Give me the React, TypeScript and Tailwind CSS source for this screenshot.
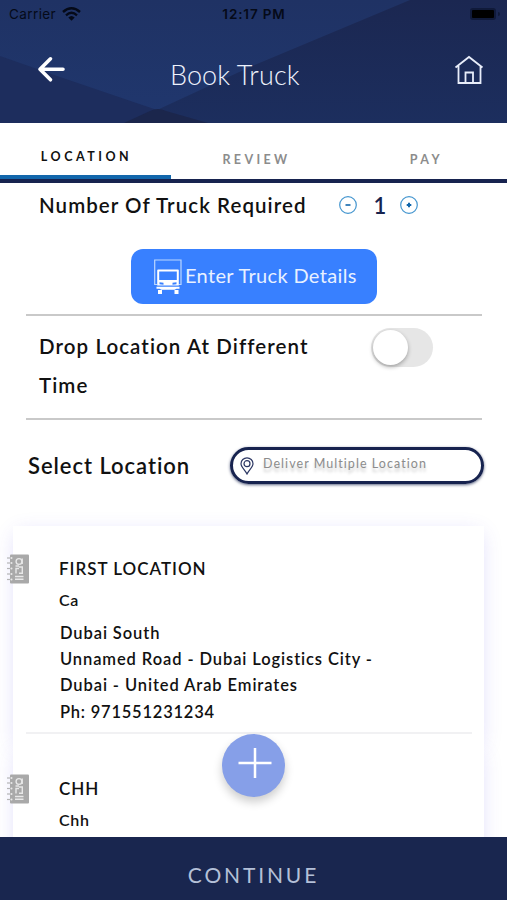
import { useState } from "react";

interface Stop {
  id: number;
  title: string;
  name: string;
  address?: string[];
  phone?: string;
}

const stops: Stop[] = [
  {
    id: 1,
    title: "FIRST LOCATION",
    name: "Ca",
    address: [
      "Dubai South",
      "Unnamed Road - Dubai Logistics City -",
      "Dubai - United Arab Emirates",
    ],
    phone: "971551231234",
  },
  { id: 2, title: "CHH", name: "Chh" },
];

const ContactIcon = () => (
  <svg width="24" height="30" viewBox="0 0 24 30" fill="none">
    <rect x="4" y="0.5" width="19" height="29" rx="1" fill="#a9a9a9" />
    {[4, 9, 14.5, 20, 25.5].map((y) => (
      <g key={y}>
        <path d={`M1 ${y}h4`} stroke="#b4b4b4" strokeWidth="1.2" />
        <circle cx="5.500" cy={y} r="1" fill="#e9e9e9" />
      </g>
    ))}
    <g stroke="#e8e8e8" strokeWidth="1.4">
      <circle cx="13" cy="7.500" r="2.900" />
      <path d="M16.200 4.500v5.500M9.500 12h3.500M10 19.500v-5h3M13 19.300h3.300v-6.300h-3.300M9 22.500h8.500M9 25.300h8.500" />
    </g>
  </svg>
);

const TruckIcon = () => (
  <svg width="28" height="36" viewBox="0 0 28 36" fill="none">
    <path d="M3 25.500H0.700V1H27V25.500H24.500" stroke="#bcd7ff" strokeWidth="1.2" />
    <path
      fill="#fff"
      fillRule="evenodd"
      d="M4 10.500h20q0.800 0 0.800 1V26.500H3.200V11.500q0-1 0.800-1zM5.200 12.500v8.500h17.600v-8.500zM5.500 23.200v2l4 0.500v-2zM22.500 23.200v2l-4 0.500v-2z"
    />
    <path d="M2.500 27.700h23v2h-3l-2 1h-13l-2-1h-3z" fill="#fff" />
    <path d="M4 31h4v4H4zM20.500 31h4v4h-4z" fill="#fff" />
  </svg>
);

const Page = () => {
  const [trucks, setTrucks] = useState(1);
  const [different, setDifferent] = useState(false);

  return (
    <div className="relative flex h-[900px] w-[507px] flex-col overflow-hidden bg-white font-['Lato',sans-serif] text-[#111]">
      {/* Header */}
      <header className="relative h-[123px] shrink-0 bg-[#1c2b5c]">
        <svg
          className="absolute inset-0"
          width="507"
          height="123"
          viewBox="0 0 507 123"
        >
          <defs>
            <linearGradient id="sky" x1="0" y1="0" x2="0" y2="1">
              <stop offset="0" stopColor="#1f3264" />
              <stop offset="1" stopColor="#20376e" />
            </linearGradient>
            <linearGradient id="right" x1="0" y1="0" x2="0" y2="1">
              <stop offset="0" stopColor="#1b2751" />
              <stop offset="1" stopColor="#1c2e5e" />
            </linearGradient>
          </defs>
          <path d="M0 0H507V123H0z" fill="url(#sky)" />
          <path d="M0 56L60 77L157 110L180 123H0z" fill="#1d2d5d" />
          <path d="M410 0H507V123H198L157 110L250 67z" fill="url(#right)" />
          <path d="M124 123L150 111Q158 107 166 111L208 123z" fill="#1b264c" />
        </svg>
        <div className="relative flex h-7 items-center justify-between pl-[9px] pr-[7px] font-['Inter',sans-serif] text-[#050a18]">
          <div className="flex w-[150px] items-center gap-[6px]">
            <span className="text-[13.500px] tracking-[0.400px]">Carrier</span>
            <svg width="19" height="14" viewBox="0 0 19 14" fill="none">
              <path d="M1 5Q9.500-2.500 18 5" stroke="#050a18" strokeWidth="2.400" />
              <path d="M4 8.300Q9.500 3.300 15 8.300" stroke="#050a18" strokeWidth="2.300" />
              <path d="M6.300 10.500Q9.500 7.500 12.700 10.500L9.500 13.700z" fill="#050a18" />
            </svg>
          </div>
          <span className="-ml-[1px] text-[13.500px] font-semibold tracking-[0.850px]">
            12:17 PM
          </span>
          <div className="flex w-[150px] items-center justify-end gap-[2px]">
            <span className="h-[12px] w-[26px] rounded-[3px] border-2 border-[#101a3a] bg-black" />
            <span className="h-1 w-[2px] rounded-r bg-[#101a3a]" />
          </div>
        </div>
        <div className="relative flex items-center pl-[37px] pr-[23px] pt-[24px]">
          <svg width="29" height="28" viewBox="0 0 29 28" fill="none" className="mb-[4px]">
            <path
              d="M13.500 4.500L3 15L13.500 25.500M3 15H26"
              transform="translate(0 -0.700)"
              stroke="#fff"
              strokeWidth="3.600"
              strokeLinecap="round"
              strokeLinejoin="round"
            />
          </svg>
          <h1 className="ml-[104px] mt-[9px] text-[27px] font-light leading-7 tracking-[0.100px] text-[#eef2fc]">
            Book Truck
          </h1>
          <svg width="30" height="30" viewBox="0 0 30 30" fill="none" className="mb-[4px] ml-auto">
            <path
              d="M1.500 13.500L15 3L28.500 13.500M4.500 12V29H26.500V12M11.500 29V18.500H19V29"
              stroke="#e8edfa"
              strokeWidth="1.800"
            />
          </svg>
        </div>
      </header>

      {/* Tabs */}
      <nav className="grid h-[60px] shrink-0 grid-cols-3 border-b-4 border-[#17234f] text-center text-[12.500px] font-bold text-[#8c8c8c]">
        <button className="w-[171px] border-b-4 border-[#1267ac] pl-[2px] pt-[17px] tracking-[3.500px] text-[#111]">
          LOCATION
        </button>
        <button className="pl-[6px] pt-[18px] tracking-[3.350px]">REVIEW</button>
        <button className="pl-[8px] pt-[18px] tracking-[3.500px]">PAY</button>
      </nav>

      {/* Truck count */}
      <section className="ml-[26px] mr-[25px] h-[133px] shrink-0 border-b-2 border-[#c9c9c9]">
        <div className="flex h-[44px] items-center pl-[13px] text-[20.500px] font-semibold">
          <span className="w-[300px] tracking-[1.050px]">
            Number Of Truck Required
          </span>
          <button onClick={() => setTrucks(Math.max(1, trucks - 1))}>
            <svg width="18" height="18" viewBox="0 0 18 18" fill="none" stroke="#4596cf">
              <circle cx="9" cy="9" r="8.300" strokeWidth="1.200" />
              <path d="M6.500 9h5" stroke="#1267ac" strokeWidth="1.600" />
            </svg>
          </button>
          <span className="w-[43px] pl-[3px] text-center text-[22px] text-[#17234f]">
            {trucks}
          </span>
          <button onClick={() => setTrucks(trucks + 1)}>
            <svg width="18" height="18" viewBox="0 0 18 18" fill="none" stroke="#4596cf">
              <circle cx="9" cy="9" r="8.300" strokeWidth="1.200" />
              <path d="M6.700 9h4.600M9 6.700v4.600" stroke="#1267ac" strokeWidth="2" />
            </svg>
          </button>
        </div>
        <button className="ml-[105px] mt-[22px] flex h-[55px] w-[246px] items-center rounded-[12px] bg-[#3880ff] pl-[23px] text-[20px] tracking-[0.350px] text-[#e8f1ff]">
          <TruckIcon />
          <span className="mb-[3px] ml-[3px] whitespace-nowrap">
            Enter Truck Details
          </span>
        </button>
      </section>

      {/* Drop time */}
      <section className="ml-[26px] mr-[25px] flex h-[104px] shrink-0 justify-between border-b-2 border-[#c9c9c9] pl-[13px] pr-[49px] pt-[11px]">
        <p className="w-[290px] text-[20.500px] font-semibold leading-[39px] tracking-[1.080px]">
          Drop Location At Different Time
        </p>
        <button
          className="mt-px h-[39px] w-[62px] shrink-0 rounded-full bg-[#e6e6e6] p-[2px]"
          onClick={() => setDifferent(!different)}
        >
          <span
            className={`block size-[35px] rounded-full bg-white shadow-[0_2px_4px_rgba(0,0,0,0.3)] ${
              different ? "ml-6" : ""
            }`}
          />
        </button>
      </section>

      <section className="flex h-[106px] shrink-0 pl-7 pr-[23px] pt-[27px]">
        <h2 className="w-[202px] text-[22px] font-semibold leading-[37px] tracking-[0.950px]">
          Select Location
        </h2>
        <button className="flex h-[37px] w-[254px] items-center rounded-full border-[3px] border-[#17234f] pl-[7px] text-[12.500px] tracking-[1.050px] text-[#8c8c8c] shadow-[0_1px_3px_rgba(23,35,79,0.7)]">
          <svg width="14" height="18" viewBox="0 0 14 18" fill="none" stroke="#2c3763" strokeWidth="1.200">
            <path d="M7 17C5 13 1 10 1 6.700A6 5.900 0 0 1 13 6.700C13 10 9 13 7 17z" />
            <circle cx="7" cy="6.700" r="3" />
          </svg>
          <span className="mb-[3px] ml-[9px] whitespace-nowrap [text-shadow:0_4px_3px_rgba(0,0,0,0.2)]">
            Deliver Multiple Location
          </span>
        </button>
      </section>

      {/* Stops */}
      <main className="relative isolate ml-[13px] w-[471px] grow">
        {stops.map((stop) => (
          <div
            key={stop.id}
            className="relative h-[220px] bg-white pt-[28px] shadow-[0_4px_20px_-4px_rgba(80,70,230,0.22)] first:z-10"
          >
            <div className="absolute inset-x-0 -bottom-6 h-10 bg-white" />
            <div className="relative -ml-[7px] flex gap-[28px]">
              <ContactIcon />
              <div className="text-[16.500px] font-semibold tracking-[0.900px]">
                <h3 className="ml-px text-[17px] leading-[30px] tracking-[0.980px]">
                  {stop.title}
                </h3>
                <p className="ml-px text-[16px] leading-8 tracking-[0.700px]">
                  {stop.name}
                </p>
                {stop.address && (
                  <div className="ml-[2px] mt-[4px] leading-[26px]">
                    {stop.address.map((line) => (
                      <p key={line} className="whitespace-nowrap">
                        {line}
                      </p>
                    ))}
                    <p className="mt-px tracking-[0.780px]">Ph: {stop.phone}</p>
                  </div>
                )}
              </div>
            </div>
            {stop.phone && (
              <div className="relative ml-[13px] mt-[7px] h-[2px] w-[446px] bg-[#f1f1f3]" />
            )}
          </div>
        ))}
      </main>

      <button className="absolute left-[222px] top-[734px] z-20 flex size-[63px] items-center justify-center rounded-full bg-[#869fe8] shadow-[0_5px_10px_rgba(0,0,0,0.2)]">
        <svg width="34" height="34" viewBox="0 0 34 34" className="mb-[5px] ml-[2px]">
          <path d="M0.500 17h33M17 2v30" stroke="#fff" strokeWidth="2.500" />
        </svg>
      </button>

      <button className="absolute inset-x-0 bottom-0 z-20 h-[63px] bg-[#19264f] pt-[12px] text-[21px] tracking-[2.850px] text-[#b4c0d8]">
        CONTINUE
      </button>
    </div>
  );
};

export default Page;
